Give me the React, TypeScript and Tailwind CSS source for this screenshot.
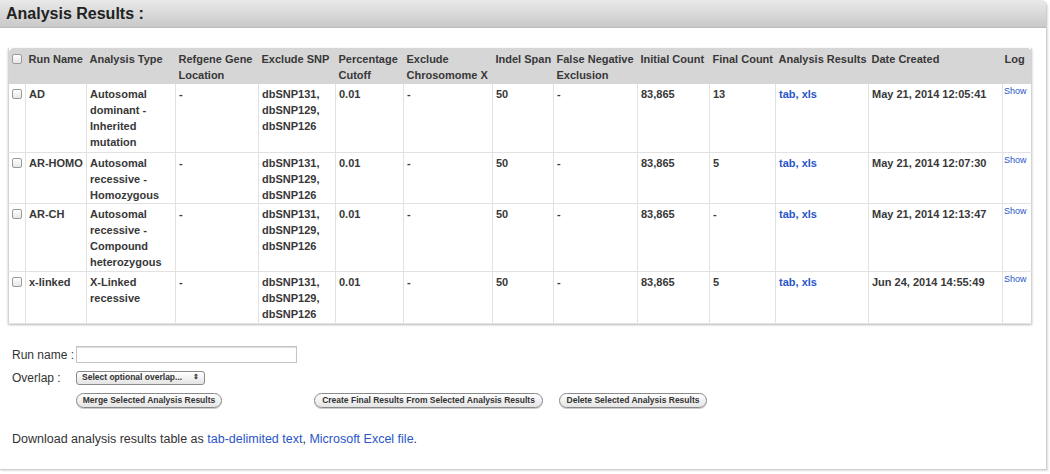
import React from "react";

type Row = {
  name: string;
  type: string[];
  initial: string;
  final: string;
  date: string;
  h: string;
};

const rows: Row[] = [
  { name: "AD", type: ["Autosomal", "dominant -", "Inherited", "mutation"], initial: "83,865", final: "13", date: "May 21, 2014 12:05:41", h: "h-[68px]" },
  { name: "AR-HOMO", type: ["Autosomal", "recessive -", "Homozygous"], initial: "83,865", final: "5", date: "May 21, 2014 12:07:30", h: "h-[50px]" },
  { name: "AR-CH", type: ["Autosomal", "recessive -", "Compound", "heterozygous"], initial: "83,865", final: "-", date: "May 21, 2014 12:13:47", h: "h-[68px]" },
  { name: "x-linked", type: ["X-Linked", "recessive"], initial: "83,865", final: "5", date: "Jun 24, 2014 14:55:49", h: "h-[52px]" },
];

function Box() {
  return <span className="inline-block w-[10px] h-[10px] rounded-[2px] border border-[#9a9a9a] bg-gradient-to-b from-white to-[#e6e6e6] align-[-1px]" />;
}

const td = "border-r border-[#e2e2e2] px-[3px] pt-[2px] align-top";
const th = "px-[3px] pt-[3px] align-top text-left font-bold";

function Pill({ children, w }: { children: React.ReactNode; w: string }) {
  return (
    <button className={`${w} h-[15px] whitespace-nowrap rounded-full border border-[#8a8a8a] bg-gradient-to-b from-white to-[#e4e4e4] text-[8.5px] font-bold text-[#333] leading-[13px] shadow-[0_1px_0_#ccc]`}>
      {children}
    </button>
  );
}

export default function App() {
  return (
    <div className="w-[1050px] h-[474px] bg-white text-[#333] font-['Liberation_Sans',Arial,sans-serif]">
      <div className="w-[1047px] h-[470px] border-r border-b border-[#cfcfcf] shadow-[1px_1px_2px_#ddd] rounded-tr-[6px] flex flex-col">
        <div className="h-[28px] rounded-tr-[6px] bg-gradient-to-b from-[#e9e9e9] to-[#c9c9c9] border-b border-[#bdbdbd] px-[6px] flex items-center">
          <h1 className="text-[16px] font-bold text-[#222]">Analysis Results :</h1>
        </div>

        <div className="pl-[8px] pt-[20px]">
          <table className="table-fixed border-collapse w-[1023px] text-[11px] leading-[16px] text-[#383838] border-l border-r border-[#d4d4d4] shadow-[0_1px_2px_#bbb]">
            <thead>
              <tr className="h-[36px] bg-[#d6d6d6]">
                <th className={`${th} w-[17px] rounded-tl-[5px]`}><Box /></th>
                <th className={`${th} w-[61px] whitespace-nowrap`}>Run Name</th>
                <th className={`${th} w-[89px]`}>Analysis Type</th>
                <th className={`${th} w-[83px]`}>Refgene Gene Location</th>
                <th className={`${th} w-[77px]`}>Exclude SNP</th>
                <th className={`${th} w-[68px]`}>Percentage Cutoff</th>
                <th className={`${th} w-[89px]`}>Exclude Chrosomome X</th>
                <th className={`${th} w-[61px] whitespace-nowrap`}>Indel Span</th>
                <th className={`${th} w-[84px]`}>False Negative Exclusion</th>
                <th className={`${th} w-[72px] whitespace-nowrap`}>Initial Count</th>
                <th className={`${th} w-[66px] whitespace-nowrap`}>Final Count</th>
                <th className={`${th} w-[93px] whitespace-nowrap`}>Analysis Results</th>
                <th className={`${th} w-[134px]`}>Date Created</th>
                <th className={`${th} w-[29px] rounded-tr-[5px] !pl-[2px]`}>Log</th>
              </tr>
            </thead>
            <tbody>
              {rows.map((r) => (
                <tr key={r.name} className={`${r.h} border-b border-[#e2e2e2] font-bold`}>
                  <td className={td}><Box /></td>
                  <td className={`${td} whitespace-nowrap`}>{r.name}</td>
                  <td className={td}>{r.type.map((t) => <div key={t}>{t}</div>)}</td>
                  <td className={td}>-</td>
                  <td className={td}><div>dbSNP131,</div><div>dbSNP129,</div><div>dbSNP126</div></td>
                  <td className={td}>0.01</td>
                  <td className={td}>-</td>
                  <td className={td}>50</td>
                  <td className={td}>-</td>
                  <td className={td}>{r.initial}</td>
                  <td className={td}>{r.final}</td>
                  <td className={`${td} text-[#2a55c8]`}><a>tab</a>, <a>xls</a></td>
                  <td className={`${td} whitespace-nowrap`}>{r.date}</td>
                  <td className="align-top pt-[1px] pl-[1px] text-[9px] leading-[12px] font-normal text-[#2a55c8]">Show</td>
                </tr>
              ))}
            </tbody>
          </table>
        </div>

        <div className="pl-[12px] pt-[22px] text-[12px] text-[#333] flex flex-col">
          <div className="flex items-center h-[18px]">
            <span className="w-[64px]">Run name :</span>
            <input className="w-[221px] h-[17px] border border-[#c4c4c4] shadow-[inset_0_1px_1px_#ddd] outline-none" />
          </div>
          <div className="flex items-center h-[14px] mt-[7px]">
            <span className="w-[64px]">Overlap :</span>
            <div className="w-[129px] h-[14px] whitespace-nowrap rounded-[3px] border border-[#8a8a8a] bg-gradient-to-b from-white to-[#e4e4e4] flex items-center justify-between px-[5px] text-[8.5px] font-bold">
              <span>Select optional overlap...</span>
              <span className="text-[7px]">⇕</span>
            </div>
          </div>
          <div className="flex items-center mt-[8px] pl-[64px]">
            <Pill w="w-[146px]">Merge Selected Analysis Results</Pill>
            <div className="w-[92px]" />
            <Pill w="w-[229px]">Create Final Results From Selected Analysis Results</Pill>
            <div className="w-[16px]" />
            <Pill w="w-[148px]">Delete Selected Analysis Results</Pill>
          </div>
          <div className="mt-[22px] text-[12.5px]">
            Download analysis results table as <a className="text-[#2a55c8]">tab-delimited text</a>, <a className="text-[#2a55c8]">Microsoft Excel file</a>.
          </div>
        </div>
      </div>
    </div>
  );
}
